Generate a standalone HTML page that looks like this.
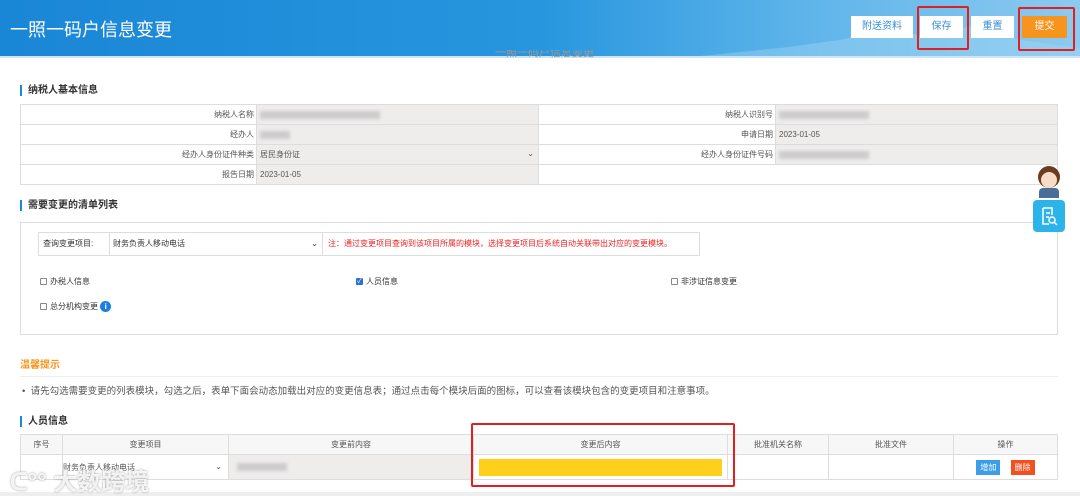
<!DOCTYPE html>
<html><head><meta charset="utf-8"><style>
*{margin:0;padding:0;box-sizing:border-box}
body{width:1080px;height:496px;overflow:hidden;background:#fff;font-family:"Liberation Sans","Noto Sans CJK SC",sans-serif;font-size:9px;color:#333;position:relative}
.abs{position:absolute}
.hdr{left:0;top:0;width:1080px;height:56px;background:linear-gradient(90deg,#1a86d6 0%,#2796de 50%,#5fb5ea 75%,#8ccaf0 100%)}
.btn{position:absolute;top:16px;height:22px;background:#fff;color:#3a8fd6;font-size:10px;text-align:center;line-height:22px}
.red{position:absolute;border:2px solid #e02020;border-radius:2px}
.sec{position:absolute;left:20px;font-size:10px;font-weight:bold;color:#333;border-left:2px solid #1b8ad6;padding-left:6px;line-height:11px}
table{border-collapse:collapse;position:absolute}
td{border:1px solid #ddd;height:20px;font-size:8px;color:#555}
.l{text-align:right;padding-right:2px;background:#fff}
.v{background:#efecec;padding-left:3px}
.blur{display:inline-block;height:8px;background:#ccc;filter:blur(1.5px);vertical-align:middle}
.cb{display:inline-block;width:7px;height:7px;border:1px solid #888;border-radius:1px;vertical-align:middle;margin-right:3px;background:#fff}
</style></head><body>
<div class="abs hdr"></div>
<svg class="abs" style="left:700px;top:18px" width="380" height="38"><path d="M0 38 L80 30 L140 22 L190 10 L230 20 L270 8 L320 22 L380 30 L380 38Z" fill="#a6d6f3" opacity=".4"/></svg>
<div class="abs" style="left:10px;top:16px;color:#fff;font-size:18px">一照一码户信息变更</div>
<div class="btn" style="left:851px;width:62px">附送资料</div>
<div class="btn" style="left:920px;width:43px">保存</div>
<div class="btn" style="left:971px;width:43px">重置</div>
<div class="btn" style="left:1022px;width:45px;background:#f7941d;color:#fff">提交</div>
<div class="red" style="left:917px;top:6px;width:52px;height:44px"></div>
<div class="red" style="left:1018px;top:7px;width:57px;height:44px"></div>
<div class="abs" style="left:0;top:56px;width:1080px;height:2px;background:#cfe5f5"></div>
<div class="abs" style="left:495px;top:50px;font-size:11px;color:#999;height:12px;overflow:hidden;line-height:6px">一照一码户信息变更</div>

<div class="sec" style="top:85px">纳税人基本信息</div>
<table style="left:20px;top:104px;width:1038px">
<tr><td class="l" style="width:236px">纳税人名称</td><td class="v" style="width:282px"><span class="blur" style="width:120px"></span></td><td class="l" style="width:237px">纳税人识别号</td><td class="v"><span class="blur" style="width:90px"></span></td></tr>
<tr><td class="l">经办人</td><td class="v"><span class="blur" style="width:30px"></span></td><td class="l">申请日期</td><td class="v">2023-01-05</td></tr>
<tr><td class="l">经办人身份证件种类</td><td class="v">居民身份证<span style="float:right;margin-right:4px">⌄</span></td><td class="l">经办人身份证件号码</td><td class="v"><span class="blur" style="width:90px"></span></td></tr>
<tr><td class="l">报告日期</td><td class="v">2023-01-05</td><td class="l" colspan="2"></td></tr>
</table>

<div class="sec" style="top:200px">需要变更的清单列表</div>
<div class="abs" style="left:20px;top:222px;width:1038px;height:113px;border:1px solid #ddd"></div>
<div class="abs" style="left:38px;top:232px;width:662px;height:24px;border:1px solid #ddd;font-size:8px;line-height:22px">
<span class="abs" style="left:4px">查询变更项目:</span>
<span class="abs" style="left:70px;width:214px;border-left:1px solid #ddd;border-right:1px solid #ddd;padding-left:3px;height:22px">财务负责人移动电话<span style="float:right;margin-right:4px">⌄</span></span>
<span class="abs" style="left:289px;color:#e22">注：通过变更项目查询到该项目所属的模块，选择变更项目后系统自动关联带出对应的变更模块。</span></div>
<div class="abs" style="left:40px;top:276px;font-size:8px"><span class="cb"></span>办税人信息</div>
<div class="abs" style="left:356px;top:276px;font-size:8px"><span class="cb" style="background:#2a6fd6;border-color:#2a6fd6;color:#fff;font-size:7px;line-height:5px;text-align:center">✓</span>人员信息</div>
<div class="abs" style="left:671px;top:276px;font-size:8px"><span class="cb"></span>非涉证信息变更</div>
<div class="abs" style="left:40px;top:301px;font-size:8px"><span class="cb"></span>总分机构变更 <span style="display:inline-block;width:11px;height:11px;border-radius:50%;background:#1a7fe0;color:#fff;text-align:center;font-size:8px;line-height:11px;font-weight:bold;vertical-align:middle">i</span></div>

<div class="abs" style="left:20px;top:356px;color:#f7941d;font-size:10px;font-weight:bold">温馨提示</div>
<div class="abs" style="left:20px;top:376px;width:1038px;height:1px;background:#eee"></div>
<div class="abs" style="left:22px;top:383px;font-size:9.5px;color:#555">•&nbsp; 请先勾选需要变更的列表模块，勾选之后，表单下面会动态加载出对应的变更信息表；通过点击每个模块后面的图标，可以查看该模块包含的变更项目和注意事项。</div>

<div class="sec" style="top:416px">人员信息</div>
<table style="left:20px;top:434px;width:1038px;text-align:center">
<tr style="background:#f7f7f7"><td style="width:42px">序号</td><td style="width:166px">变更项目</td><td style="width:245px">变更前内容</td><td style="width:254px">变更后内容</td><td style="width:101px">批准机关名称</td><td style="width:125px">批准文件</td><td>操作</td></tr>
<tr style="height:25px"><td></td><td style="text-align:left;background:#fff">财务负责人移动电话<span style="float:right;margin-right:6px">⌄</span></td><td style="background:#efecec;text-align:left;padding-left:8px"><span class="blur" style="width:50px"></span></td><td style="padding:2px 5px"><div style="background:#fecf1b;height:17px"></div></td><td></td><td></td><td><span style="display:inline-block;background:#3d9ee8;color:#fff;padding:2px 4px">增加</span> <span style="display:inline-block;background:#f2501e;color:#fff;padding:2px 4px;margin-left:8px">删除</span></td></tr>
</table>
<div class="red" style="left:471px;top:423px;width:264px;height:64px"></div>
<div class="abs" style="left:0;top:492px;width:1080px;height:4px;background:#eee"></div>
<div class="abs" style="left:10px;top:462px;font-size:24px;color:rgba(255,255,255,.85);text-shadow:0 0 2px #999;font-weight:bold">ᑕ°° 大数跨境</div>

<div class="abs" style="left:1034px;top:166px;width:28px;height:32px">
<div class="abs" style="left:4px;top:0;width:22px;height:22px;border-radius:50%;background:#6b3b22"></div>
<div class="abs" style="left:7px;top:6px;width:16px;height:16px;border-radius:50%;background:#f7dcc8"></div>
<div class="abs" style="left:5px;top:22px;width:20px;height:10px;background:#4a6d9a;border-radius:4px 4px 0 0"></div></div>
<div class="abs" style="left:1033px;top:200px;width:32px;height:32px;background:#2bb3ea;border-radius:4px"><svg width="32" height="32"><path d="M10 8h9v7M10 8v16h6M13 13h4M13 17h3" stroke="#fff" stroke-width="1.5" fill="none"/><circle cx="19" cy="20" r="3" stroke="#fff" stroke-width="1.5" fill="none"/><path d="M21 22l3 3" stroke="#fff" stroke-width="1.5"/></svg></div>
</body></html>
